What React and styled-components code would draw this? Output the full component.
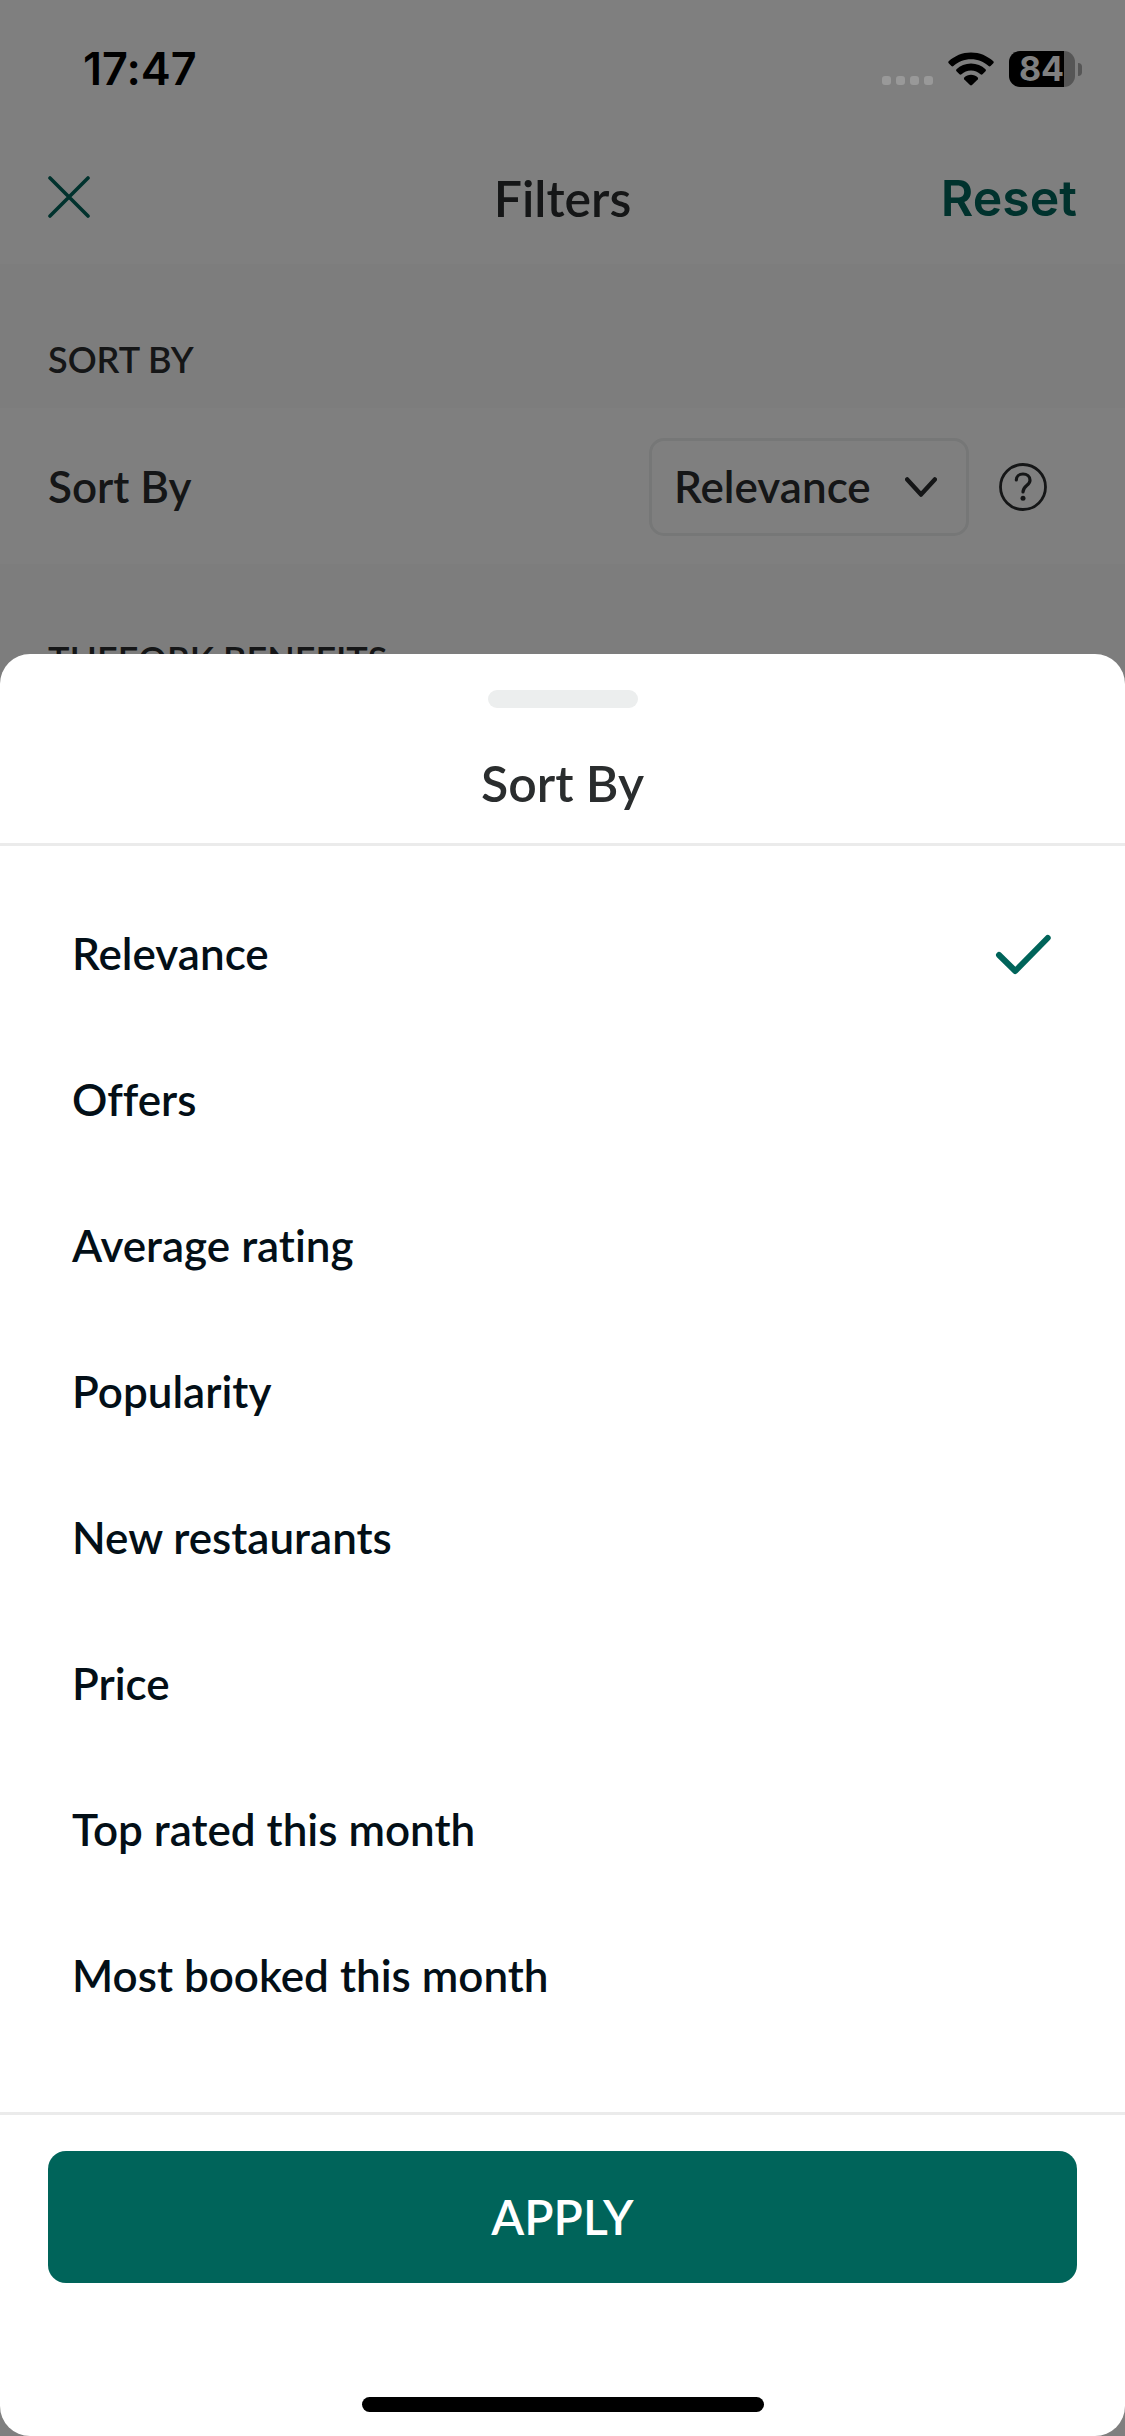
import React, { useState } from 'react';
import styled, { createGlobalStyle } from 'styled-components';

const SORT_OPTIONS = [
  'Relevance',
  'Offers',
  'Average rating',
  'Popularity',
  'New restaurants',
  'Price',
  'Top rated this month',
  'Most booked this month',
];

const App = () => {
  const [selected, setSelected] = useState('Relevance');

  return (
    <Screen>
      <GlobalStyle />
      <Page>
        <StatusBar>
          <Clock>17:47</Clock>
          <StatusIcons>
            <Signal>
              <Dot />
              <Dot />
              <Dot />
              <Dot />
            </Signal>
            <WifiIcon />
            <Battery>
              <BatteryBody>84</BatteryBody>
              <BatteryTip />
            </Battery>
          </StatusIcons>
        </StatusBar>

        <Header>
          <CloseButton type="button" aria-label="Close">
            <CloseIcon />
          </CloseButton>
          <Title>Filters</Title>
          <ResetButton type="button">Reset</ResetButton>
        </Header>

        <SectionTitle>SORT BY</SectionTitle>
        <Row>
          <RowLabel htmlFor="sort">Sort By</RowLabel>
          <SelectWrapper>
            <Select id="sort" value={selected} onChange={(e) => setSelected(e.target.value)}>
              {SORT_OPTIONS.map((option) => (
                <option key={option}>{option}</option>
              ))}
            </Select>
            <ChevronIcon />
          </SelectWrapper>
          <HelpButton type="button" aria-label="Help">
            <HelpIcon />
          </HelpButton>
        </Row>
        <SectionTitle>THEFORK BENEFITS</SectionTitle>
      </Page>

      <Backdrop>
        <Sheet role="dialog" aria-labelledby="sheet-title">
          <SheetHeader>
            <Handle />
            <Title id="sheet-title">Sort By</Title>
          </SheetHeader>
          <Options>
            {SORT_OPTIONS.map((option) => (
              <Option key={option}>
                {option}
                <Radio
                  type="radio"
                  name="sort-option"
                  value={option}
                  checked={selected === option}
                  onChange={() => setSelected(option)}
                />
                {selected === option && <CheckIcon />}
              </Option>
            ))}
          </Options>
          <SheetFooter>
            <ApplyButton type="button">APPLY</ApplyButton>
            <HomeIndicator />
          </SheetFooter>
        </Sheet>
      </Backdrop>
    </Screen>
  );
};

const WifiIcon = () => (
  <svg width="46" height="34" viewBox="0 0 46 34" fill="#000">
    <path d="M23 0.5C31.6 0.5 39.5 3.9 45.3 9.3Q46.2 10.3 45.3 11.3L42.6 14Q41.6 14.9 40.6 14C36 9.8 29.8 7.3 23 7.3S10 9.8 5.4 14Q4.4 14.9 3.4 14L0.7 11.3Q-0.2 10.3 0.7 9.3C6.5 3.9 14.4 0.5 23 0.5Z" />
    <path d="M23 11.6C28.7 11.6 33.7 13.8 37.5 17.3Q38.5 18.3 37.5 19.3L34.5 22.3Q33.5 23.2 32.5 22.3C30 20.1 26.7 18.6 23 18.6S16 20.1 13.5 22.3Q12.5 23.2 11.5 22.3L8.5 19.3Q7.5 18.3 8.5 17.3C12.3 13.8 17.3 11.6 23 11.6Z" />
    <path d="M23 22.8C25.6 22.8 28 23.8 29.7 25.4Q30.6 26.4 29.7 27.4L24 33Q23 33.9 22 33L16.3 27.4Q15.4 26.4 16.3 25.4C18 23.8 20.4 22.8 23 22.8Z" />
  </svg>
);

const CloseIcon = () => (
  <svg width="42" height="42" viewBox="0 0 42 42" fill="none" stroke="currentColor" strokeWidth="3.6" strokeLinecap="round">
    <path d="M2 2L40 40M40 2L2 40" />
  </svg>
);

const HelpIcon = () => (
  <svg width="48" height="48" viewBox="0 0 48 48" fill="none" stroke="currentColor" strokeWidth="2.8" strokeLinecap="round">
    <circle cx="24" cy="24" r="22.5" />
    <path d="M17.3 17C17.3 13.4 20.2 11 24 11C27.9 11 31 13.6 31 17.2C31 22.6 24 22.6 24 29" strokeWidth="3.2" />
    <circle cx="24" cy="35.3" r="2.5" fill="currentColor" stroke="none" />
  </svg>
);

const CheckIcon = () => (
  <svg width="60" height="44" viewBox="0 0 60 44" fill="none" stroke="#00645a" strokeWidth="6" strokeLinecap="round" strokeLinejoin="round">
    <path d="M6 24L22.3 40L54.7 7" />
  </svg>
);

const GlobalStyle = createGlobalStyle`
  * {
    box-sizing: border-box;
  }

  body {
    margin: 0;
    font-family: Lato, 'Noto Sans', sans-serif;
    font-weight: 600;
    font-variant-ligatures: none;
    color: #2a2d2e;
  }

  svg {
    display: block;
    flex-shrink: 0;
  }

  button {
    padding: 0;
    border: none;
    background: none;
    font: inherit;
    color: inherit;
    cursor: pointer;
  }
`;

const Screen = styled.div`
  position: relative;
  min-height: 100vh;
  overflow: hidden;
  background-color: #fff;
`;

const Page = styled.div`
  display: flex;
  flex-direction: column;
`;

// stays above the backdrop, like the system bar does
const StatusBar = styled.div`
  position: relative;
  z-index: 1;
  display: flex;
  align-items: center;
  justify-content: space-between;
  height: 132px;
  padding: 6px 43px 0 83px;
`;

const Clock = styled.div`
  padding-bottom: 2px;
  font-family: Inter, sans-serif;
  font-size: 45px;
  color: #000;
`;

const StatusIcons = styled.div`
  display: flex;
  align-items: center;
  gap: 15px;
`;

const Signal = styled.div`
  display: flex;
  align-self: flex-end;
  gap: 5px;
  padding: 0 0 2px;
`;

const Dot = styled.span`
  width: 9px;
  height: 9px;
  border-radius: 3px;
  background-color: #999;
`;

const Battery = styled.div`
  display: flex;
  align-items: center;
  gap: 3px;
`;

const BatteryBody = styled.div`
  width: 66px;
  padding-right: 1px;
  border-radius: 11px;
  background: linear-gradient(to right, #000 55px, #565656 55px);
  font-family: Inter, sans-serif;
  font-size: 34px;
  font-weight: 700;
  line-height: 36px;
  text-align: center;
  color: #808080;
`;

const BatteryTip = styled.div`
  width: 4px;
  height: 13px;
  border-radius: 0 4px 4px 0;
  background-color: #565656;
`;

const Header = styled.header`
  display: grid;
  grid-template-columns: 1fr auto 1fr;
  align-items: center;
  height: 132px;
  padding: 0 48px;
`;

const Title = styled.h1`
  margin: 0;
  font-size: 50px;
  font-weight: 600;
  line-height: 60px;
`;

const CloseButton = styled.button`
  justify-self: start;
  padding-bottom: 2px;
  color: #00645a;
`;

const ResetButton = styled.button`
  justify-self: end;
  font-family: Inter, sans-serif;
  font-size: 50px;
  line-height: 60px;
  color: #00645a;
`;

const SectionTitle = styled.h2`
  margin: 0;
  padding: 71px 48px 25px;
  background-color: #fafafa;
  font-size: 36px;
  font-weight: 600;
  line-height: 48px;
`;

const Row = styled.div`
  display: flex;
  align-items: center;
  height: 156px;
  padding: 2px 78px 0 48px;
`;

const RowLabel = styled.label`
  flex: 1;
  padding-bottom: 2px;
  font-size: 44px;
`;

const SelectWrapper = styled.div`
  position: relative;
  margin-right: 30px;
`;

const Select = styled.select`
  display: block;
  width: 320px;
  height: 98px;
  padding: 0 60px 2px 22px;
  border: 3px solid #eceeee;
  border-radius: 15px;
  appearance: none;
  background-color: #fff;
  font: inherit;
  font-size: 44px;
  color: inherit;
`;

const ChevronIcon = styled(({ className }) => (
  <svg className={className} viewBox="0 0 32 20" fill="none" stroke="currentColor" strokeWidth="4.4" strokeLinecap="round" strokeLinejoin="round">
    <path d="M2.2 2.4L16 17.6L29.8 2.4" />
  </svg>
))`
  position: absolute;
  top: 39px;
  right: 32px;
  width: 32px;
  height: 20px;
  pointer-events: none;
`;

const HelpButton = styled.button`
  border-radius: 50%;
`;

const Backdrop = styled.div`
  position: absolute;
  inset: 0;
  display: flex;
  align-items: flex-end;
  background-color: rgba(0, 0, 0, 0.5);
`;

const Sheet = styled.section`
  width: 100%;
  border-radius: 30px;
  background-color: #fff;
`;

const SheetHeader = styled.div`
  display: flex;
  flex-direction: column;
  align-items: center;
  gap: 45px;
  padding: 36px 48px 30px;
  border-bottom: 3px solid #ebebeb;
`;

const Handle = styled.div`
  width: 150px;
  height: 18px;
  border-radius: 9px;
  background-color: #eceeee;
`;

const Options = styled.div`
  padding: 35px 72px 63px;
`;

const Option = styled.label`
  position: relative;
  display: flex;
  align-items: center;
  justify-content: space-between;
  height: 146px;
  padding-bottom: 2px;
  font-size: 44px;
  color: #030f17;
  cursor: pointer;
`;

const Radio = styled.input`
  position: absolute;
  inset: 0;
  margin: 0;
  opacity: 0;
  cursor: pointer;
`;

const SheetFooter = styled.div`
  display: flex;
  flex-direction: column;
  align-items: center;
  gap: 114px;
  padding: 36px 48px 24px;
  border-top: 3px solid #ebebeb;
`;

const ApplyButton = styled.button`
  width: 100%;
  height: 132px;
  padding-bottom: 2px;
  border-radius: 18px;
  background-color: #00645a;
  font-size: 48px;
  color: #fff;
`;

const HomeIndicator = styled.div`
  width: 402px;
  height: 15px;
  border-radius: 8px;
  background-color: #000;
`;

export default App;
